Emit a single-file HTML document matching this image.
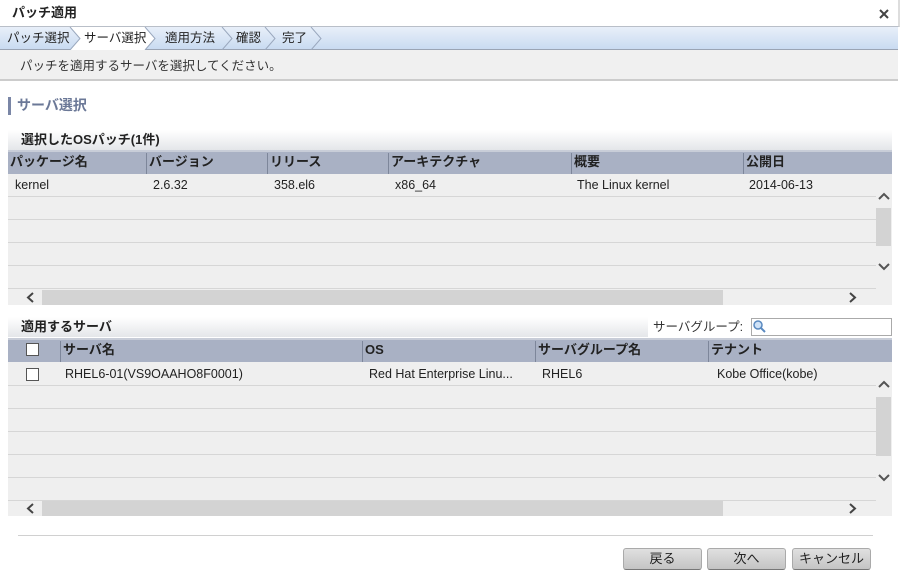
<!DOCTYPE html>
<html><head><meta charset="utf-8"><style>
*{margin:0;padding:0;box-sizing:border-box}
body{width:900px;height:581px;position:relative;overflow:hidden;background:#fff;font-family:"Liberation Sans","Noto Sans CJK JP",sans-serif;font-size:12px;line-height:16px;color:#222}
.a{position:absolute;white-space:nowrap}
.hdr{position:absolute;left:8px;width:884px;height:24px;background:#a9b1c4;border-top:2px solid #c8cdd8}
.hdr span{position:absolute;top:1px;font-weight:bold;font-size:13px;color:#222;padding-left:2px;border-left:1px solid #7d869a;height:21px;line-height:18px}
.rows{position:absolute;left:8px;width:868px;background:#efefef}
.ln{position:absolute;left:0;width:868px;height:1px;background:#d6d6d6}
.vs{position:absolute;left:876px;width:16px;background:#efefef}
.hs{position:absolute;left:8px;width:884px;height:15px;background:#efefef}
.ttl{position:absolute;left:8px;width:884px;height:20px;background:linear-gradient(#fff,#e4e6e9);font-weight:bold;font-size:13px;padding-left:13px;line-height:20px}
.btn{position:absolute;top:548px;width:79px;height:22px;border-radius:3px;background:linear-gradient(#e0e0e0,#c4c4c4);border:1px solid #aaa;border-bottom-color:#777;text-align:center;line-height:20px;font-size:13px}
.t{font-size:12.5px;line-height:16px}
</style></head><body>
<div class="a" style="left:0;top:0;width:900px;height:27px;border-bottom:1px solid #b9bfc8;border-right:2px solid #ddd"></div>
<div class="a" style="left:12px;top:5px;font-weight:bold;font-size:13px;line-height:16px">パッチ適用</div>
<svg class="a" style="left:879px;top:9px" width="10" height="10"><path d="M1 1L9 9M9 1L1 9" stroke="#444" stroke-width="2"/></svg>
<div class="a" style="left:0;top:27px;width:898px;height:23px;background:linear-gradient(#e8eff9,#c9dbf1);border-bottom:1px solid #9aa4b4"></div>
<svg class="a" style="left:0;top:27px" width="330" height="23"><polygon points="70,0 145,0 155,11.5 145,23 70,23 80,11.5" fill="#fff"/>
<g fill="none" stroke="#9aa8be"><polyline points="70,0 80,11.5 70,23"/><polyline points="145,0 155,11.5 145,23"/><polyline points="222,0 232,11.5 222,23"/><polyline points="265,0 275,11.5 265,23"/><polyline points="311,0 321,11.5 311,23"/></g></svg>
<div class="a t" style="left:7px;top:30px">パッチ選択</div>
<div class="a t" style="left:84px;top:30px">サーバ選択</div>
<div class="a t" style="left:165px;top:30px">適用方法</div>
<div class="a t" style="left:236px;top:30px">確認</div>
<div class="a t" style="left:282px;top:30px">完了</div>
<div class="a" style="left:0;top:50px;width:898px;height:31px;background:#f0f0f0;border-bottom:2px solid #ccc"></div>
<div class="a t" style="left:20px;top:58px;color:#333">パッチを適用するサーバを選択してください。</div>
<div class="a" style="left:8px;top:97px;width:3px;height:18px;background:#7a86a6"></div>
<div class="a" style="left:17px;top:96px;font-size:14px;line-height:18px;font-weight:bold;color:#6b7897">サーバ選択</div>

<div class="ttl" style="top:130px">選択したOSパッチ(1件)</div>
<div class="hdr" style="top:150px"><span style="left:0;border-left:none">パッケージ名</span><span style="left:138px">バージョン</span><span style="left:259px">リリース</span><span style="left:380px">アーキテクチャ</span><span style="left:563px">概要</span><span style="left:735px">公開日</span></div>
<div class="rows" style="top:174px;height:116px"><div class="ln" style="top:22px"></div><div class="ln" style="top:45px"></div><div class="ln" style="top:68px"></div><div class="ln" style="top:91px"></div><div class="ln" style="top:114px"></div></div>
<div class="a t" style="left:15px;top:177px">kernel</div>
<div class="a t" style="left:153px;top:177px">2.6.32</div>
<div class="a t" style="left:274px;top:177px">358.el6</div>
<div class="a t" style="left:395px;top:177px">x86_64</div>
<div class="a t" style="left:577px;top:177px">The Linux kernel</div>
<div class="a t" style="left:749px;top:177px">2014-06-13</div>
<div class="vs" style="top:174px;height:116px"></div>
<div class="a" style="left:876px;top:208px;width:15px;height:38px;background:#d3d3d3"></div>
<svg class="a" style="left:877px;top:192px" width="14" height="8"><path d="M2 7L7 2L12 7" fill="none" stroke="#555" stroke-width="2"/></svg>
<svg class="a" style="left:877px;top:263px" width="14" height="8"><path d="M2 1L7 6L12 1" fill="none" stroke="#555" stroke-width="2"/></svg>
<div class="hs" style="top:290px"></div>
<div class="a" style="left:42px;top:290px;width:681px;height:15px;background:#d3d3d3"></div>
<svg class="a" style="left:25px;top:292px" width="10" height="11"><path d="M8 1L3 5.5L8 10" fill="none" stroke="#444" stroke-width="2"/></svg>
<svg class="a" style="left:848px;top:292px" width="10" height="11"><path d="M2 1L7 5.5L2 10" fill="none" stroke="#444" stroke-width="2"/></svg>

<div class="ttl" style="top:317px;width:640px">適用するサーバ</div>
<div class="a t" style="left:653px;top:319px;color:#333">サーバグループ:</div>
<div class="a" style="left:751px;top:318px;width:141px;height:18px;border:1px solid #aaa;background:#fff"></div>
<svg class="a" style="left:752px;top:319px" width="14" height="14"><circle cx="6" cy="6" r="4" fill="#cfe2f7" stroke="#5a8ac0" stroke-width="1.5"/><line x1="9" y1="9" x2="13" y2="13" stroke="#5a8ac0" stroke-width="2"/></svg>
<div class="hdr" style="top:338px"><span style="left:52px">サーバ名</span><span style="left:354px">OS</span><span style="left:527px">サーバグループ名</span><span style="left:700px">テナント</span></div>
<div class="a" style="left:26px;top:343px;width:13px;height:13px;border:1px solid #555;background:#fff"></div>
<div class="rows" style="top:362px;height:139px"><div class="ln" style="top:23px"></div><div class="ln" style="top:46px"></div><div class="ln" style="top:69px"></div><div class="ln" style="top:92px"></div><div class="ln" style="top:115px"></div><div class="ln" style="top:138px"></div></div>
<div class="a" style="left:26px;top:368px;width:13px;height:13px;border:1px solid #555;background:#fff"></div>
<div class="a t" style="left:65px;top:366px">RHEL6-01(VS9OAAHO8F0001)</div>
<div class="a t" style="left:369px;top:366px">Red Hat Enterprise Linu...</div>
<div class="a t" style="left:542px;top:366px">RHEL6</div>
<div class="a t" style="left:717px;top:366px">Kobe Office(kobe)</div>
<div class="vs" style="top:362px;height:139px"></div>
<div class="a" style="left:876px;top:397px;width:15px;height:59px;background:#d3d3d3"></div>
<svg class="a" style="left:877px;top:380px" width="14" height="8"><path d="M2 7L7 2L12 7" fill="none" stroke="#555" stroke-width="2"/></svg>
<svg class="a" style="left:877px;top:474px" width="14" height="8"><path d="M2 1L7 6L12 1" fill="none" stroke="#555" stroke-width="2"/></svg>
<div class="hs" style="top:501px"></div>
<div class="a" style="left:42px;top:501px;width:681px;height:15px;background:#d3d3d3"></div>
<svg class="a" style="left:25px;top:503px" width="10" height="11"><path d="M8 1L3 5.5L8 10" fill="none" stroke="#444" stroke-width="2"/></svg>
<svg class="a" style="left:848px;top:503px" width="10" height="11"><path d="M2 1L7 5.5L2 10" fill="none" stroke="#444" stroke-width="2"/></svg>

<div class="a" style="left:18px;top:535px;width:855px;height:1px;background:#d0d0d0"></div>
<div class="btn" style="left:623px">戻る</div>
<div class="btn" style="left:707px">次へ</div>
<div class="btn" style="left:792px">キャンセル</div>
</body></html>
